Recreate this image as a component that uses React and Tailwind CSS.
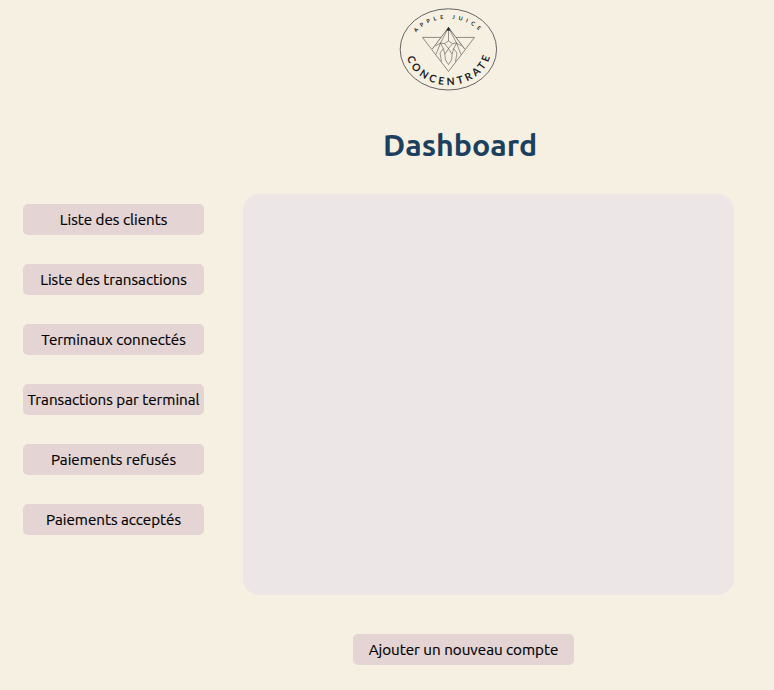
const menu = [
  "Liste des clients",
  "Liste des transactions",
  "Terminaux connectés",
  "Transactions par terminal",
  "Paiements refusés",
  "Paiements acceptés",
];

function Logo() {
  return (
    <svg width="100" height="85" viewBox="399 7 100 85" fill="none" stroke="#444" strokeWidth="0.55">
      <ellipse cx="448.4" cy="49.4" rx="48.2" ry="40.6" strokeWidth="0.9" stroke="#555" />
      <path id="arc-top" d="M409.9 49 A38.5 30.3 0 0 1 486.9 49" stroke="none" />
      <path id="arc-bottom" d="M405.8 49 A42.6 36 0 0 0 491 49" stroke="none" />
      <g fill="#222" stroke="none" fontFamily="Lato, sans-serif">
        <text fontSize="5.4" fontWeight="700">
          <textPath href="#arc-top" startOffset="18" textLength="69.5" lengthAdjust="spacing">APPLE JUICE</textPath>
        </text>
        <text fontSize="10.4" fontWeight="700">
          <textPath href="#arc-bottom" startOffset="8.5" textLength="107" lengthAdjust="spacing">CONCENTRATE</textPath>
        </text>
      </g>
      <path d="M441 37.4 H422.5 L448.5 71.5 L474.5 37.4 H456" strokeWidth="0.6" />
      <path d="M448.5 27.5 L432.3 49 M448.5 27.5 L464.7 49" strokeWidth="0.7" />
      <path d="M448.5 27.5 L440.5 43 L436 54.5 M448.5 27.5 L456.5 43 L461 54.5 M448.5 27.5 V41" />
      <path d="M435.5 46 L440.5 43 L444.5 43.6 L448.5 41 L452.5 43.6 L456.5 43 L461.5 46" />
      <path d="M444.5 43.6 L448.5 48.5 L452.5 43.6 M440.5 43 L443.5 49 L444.8 54 M456.5 43 L453.5 49 L452.2 54" />
      <path d="M443.5 48.5 L440 53 L441.5 61.5 M453.5 48.5 L457 53 L455.5 61.5" />
      <path d="M448.5 48.5 L444.8 54.5 L445.5 60 L448.5 64.5 L451.5 60 L452.2 54.5 Z" />
      <path d="M448.5 27 L446.8 30.5 H450.2 Z" fill="#222" />
    </svg>
  );
}

function Button({ label, className }) {
  return (
    <button className={`h-[31px] rounded-[5px] bg-[#e4d4d4] text-[15.2px] leading-[31px] whitespace-nowrap text-black [-webkit-text-stroke:0.2px_black] ${className}`}>
      {label}
    </button>
  );
}

export default function App() {
  return (
    <div className="h-[690px] w-[774px] overflow-hidden bg-[#f6f0e2] font-['Ubuntu','Noto_Sans',sans-serif]">
      <header className="pt-[7px] pl-[399px]">
        <Logo />
      </header>
      <h1 className="mt-[31px] ml-[383px] h-[45px] text-[30.4px] leading-[44px] font-bold whitespace-nowrap text-[#1c3f60]">
        Dashboard
      </h1>
      <main className="mt-[26px] flex gap-[39px] pl-[23px]">
        <nav className="flex w-[181px] flex-col gap-[29px] pt-[10px]">
          {menu.map((label) => (
            <Button key={label} label={label} className="w-[181px]" />
          ))}
        </nav>
        <section className="h-[401px] w-[491px] rounded-[16px] bg-[#ece6e6]" />
      </main>
      <footer className="mt-[39px] pl-[353px]">
        <Button label="Ajouter un nouveau compte" className="w-[221px]" />
      </footer>
    </div>
  );
}
